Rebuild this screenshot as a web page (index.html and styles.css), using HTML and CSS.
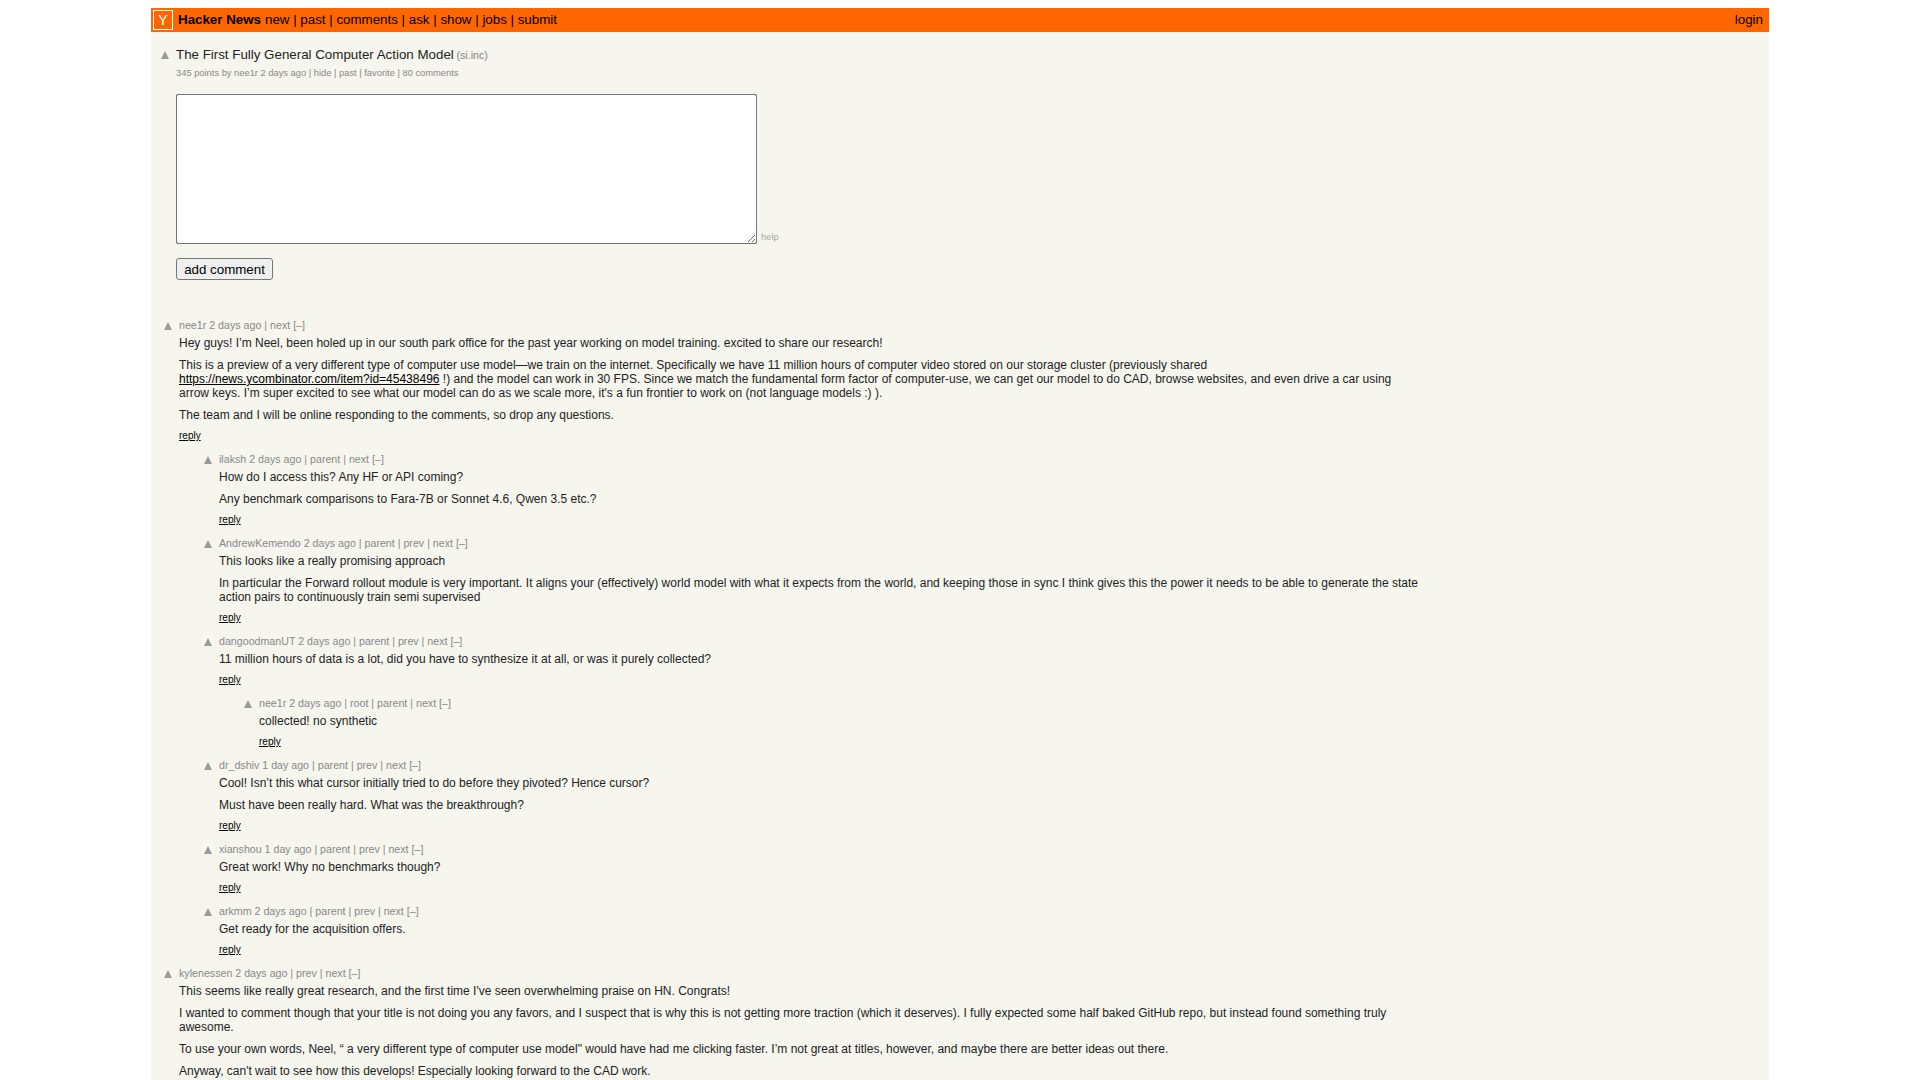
FILE: index.html
```html
<!DOCTYPE html>
<html lang="en">
<head>
<meta charset="utf-8">
<title>The First Fully General Computer Action Model | Hacker News</title>
<link rel="stylesheet" href="styles.css">
</head>
<body>
<div class="page">
  <header class="topbar">
    <span class="logo">Y</span>
    <b class="brand">Hacker News</b>
    <nav class="nav"><a>new</a> | <a>past</a> | <a>comments</a> | <a>ask</a> | <a>show</a> | <a>jobs</a> | <a>submit</a></nav>
    <a class="login">login</a>
  </header>
  <section class="story">
    <div class="story-title"><span class="arrow"></span><div><span class="title">The First Fully General Computer Action Model</span> <span class="site">(si.inc)</span></div></div>
    <div class="subtext">345 points by nee1r 2 days ago | hide | past | favorite | 80 comments</div>
    <div class="form-row"><textarea class="box" aria-label="comment"></textarea><span class="help">help</span></div>
    <button class="submit" type="button">add comment</button>
  </section>
  <section class="comments">
    <article class="c">
      <div class="head"><span class="arrow"></span><span>nee1r 2 days ago | next [–]</span></div>
      <div class="body">
        <div>Hey guys! I’m Neel, been holed up in our south park office for the past year working on model training. excited to share our research!</div>
        <p>This is a preview of a very different type of computer use model—we train on the internet. Specifically we have 11 million hours of computer video stored on our storage cluster (previously shared <a class="link">https://news.ycombinator.com/item?id=45438496</a> !) and the model can work in 30 FPS. Since we match the fundamental form factor of computer-use, we can get our model to do CAD, browse websites, and even drive a car using arrow keys. I’m super excited to see what our model can do as we scale more, it's a fun frontier to work on (not language models :) ).</p>
        <p>The team and I will be online responding to the comments, so drop any questions.</p>
        <p class="reply"><a>reply</a></p>
      </div>
    </article>
    <article class="c l1">
      <div class="head"><span class="arrow"></span><span>ilaksh 2 days ago | parent | next [–]</span></div>
      <div class="body">
        <div>How do I access this? Any HF or API coming?</div>
        <p>Any benchmark comparisons to Fara-7B or Sonnet 4.6, Qwen 3.5 etc.?</p>
        <p class="reply"><a>reply</a></p>
      </div>
    </article>
    <article class="c l1">
      <div class="head"><span class="arrow"></span><span>AndrewKemendo 2 days ago | parent | prev | next [–]</span></div>
      <div class="body">
        <div>This looks like a really promising approach</div>
        <p>In particular the Forward rollout module is very important. It aligns your (effectively) world model with what it expects from the world, and keeping those in sync I think gives this the power it needs to be able to generate the state action pairs to continuously train semi supervised</p>
        <p class="reply"><a>reply</a></p>
      </div>
    </article>
    <article class="c l1">
      <div class="head"><span class="arrow"></span><span>dangoodmanUT 2 days ago | parent | prev | next [–]</span></div>
      <div class="body">
        <div>11 million hours of data is a lot, did you have to synthesize it at all, or was it purely collected?</div>
        <p class="reply"><a>reply</a></p>
      </div>
    </article>
    <article class="c l2">
      <div class="head"><span class="arrow"></span><span>nee1r 2 days ago | root | parent | next [–]</span></div>
      <div class="body">
        <div>collected! no synthetic</div>
        <p class="reply"><a>reply</a></p>
      </div>
    </article>
    <article class="c l1">
      <div class="head"><span class="arrow"></span><span>dr_dshiv 1 day ago | parent | prev | next [–]</span></div>
      <div class="body">
        <div>Cool! Isn’t this what cursor initially tried to do before they pivoted? Hence cursor?</div>
        <p>Must have been really hard. What was the breakthrough?</p>
        <p class="reply"><a>reply</a></p>
      </div>
    </article>
    <article class="c l1">
      <div class="head"><span class="arrow"></span><span>xianshou 1 day ago | parent | prev | next [–]</span></div>
      <div class="body">
        <div>Great work! Why no benchmarks though?</div>
        <p class="reply"><a>reply</a></p>
      </div>
    </article>
    <article class="c l1">
      <div class="head"><span class="arrow"></span><span>arkmm 2 days ago | parent | prev | next [–]</span></div>
      <div class="body">
        <div>Get ready for the acquisition offers.</div>
        <p class="reply"><a>reply</a></p>
      </div>
    </article>
    <article class="c">
      <div class="head"><span class="arrow"></span><span>kylenessen 2 days ago | prev | next [–]</span></div>
      <div class="body">
        <div>This seems like really great research, and the first time I've seen overwhelming praise on HN. Congrats!</div>
        <p>I wanted to comment though that your title is not doing you any favors, and I suspect that is why this is not getting more traction (which it deserves). I fully expected some half baked GitHub repo, but instead found something truly awesome.</p>
        <p>To use your own words, Neel, “ a very different type of computer use model" would have had me clicking faster. I’m not great at titles, however, and maybe there are better ideas out there.</p>
        <p>Anyway, can't wait to see how this develops! Especially looking forward to the CAD work.</p>
      </div>
    </article>
  </section>
</div>
</body>
</html>
```
FILE: styles.css
```css
html, body { height: 1080px; overflow: hidden; }
body { margin: 0; background: #fff; font-family: "Liberation Sans", Arial, sans-serif; color: #000; }
.page { width: 1618px; height: 1072px; margin: 8px auto 0; background: #f6f6ef; overflow: hidden; }

.topbar { display: flex; align-items: center; height: 24px; background: #ff6600; font-size: 13.33px; padding: 0 6px 0 2px; }
.logo { box-sizing: border-box; width: 20px; height: 20px; border: 1px solid #fff; color: #fff; font-size: 14px; line-height: 18px; text-align: center; flex: none; }
.brand { margin: 0 0 2px 5px; }
.nav { margin: 0 0 2px 4px; flex: 1; }
.login { flex: none; margin-bottom: 2px; }

.arrow { display: block; width: 0; height: 0; border-left: 4px solid transparent; border-right: 4px solid transparent; border-bottom: 8px solid #9a9a9a; flex: none; }

.story { padding: 15px 0 0 25px; }
.story-title { display: flex; align-items: center; font-size: 13.33px; line-height: 15px; margin-left: -15px; gap: 7px; }
.title { color: #222; }
.site { font-size: 10.67px; color: #828282; margin-left: -1px; }
.subtext { font-size: 9.33px; color: #888; line-height: 11px; margin-top: 5px; }
.form-row { display: flex; align-items: flex-end; margin-top: 15px; }
.box { box-sizing: border-box; display: block; width: 581px; height: 150px; margin: 0; padding: 2px; background: #fff; border: 1px solid #767676; border-radius: 2px; resize: both; outline: 1px solid #767676; outline-offset: -1px; }
.help { font-size: 9.33px; color: #a8a8a8; margin-left: 4px; line-height: 11px; margin-bottom: 1px; }
.submit { display: block; width: 97px; height: 22px; margin: 14px 0 0; padding: 0; font: 13.33px "Liberation Sans", Arial, sans-serif; color: #000; background: #efefef; border: 1px solid #767676; border-radius: 3px; }

.comments { padding: 39px 0 0 13px; width: 1257px; }
.c { margin-bottom: 12px; }
.l1 { padding-left: 40px; }
.l2 { padding-left: 80px; }
.head { display: flex; align-items: center; gap: 7px; font-size: 10.67px; line-height: 13px; color: #888; }
.body { font-size: 12px; margin: 4px 0 0 15px; color: #222; }
.body p { margin: 8px 0 0; }
.link { color: #000; text-decoration: underline; white-space: nowrap; }
.body .reply { font-size: 10px; line-height: 11px; margin-top: 8px; color: #000; }
.reply a { text-decoration: underline; }
```
